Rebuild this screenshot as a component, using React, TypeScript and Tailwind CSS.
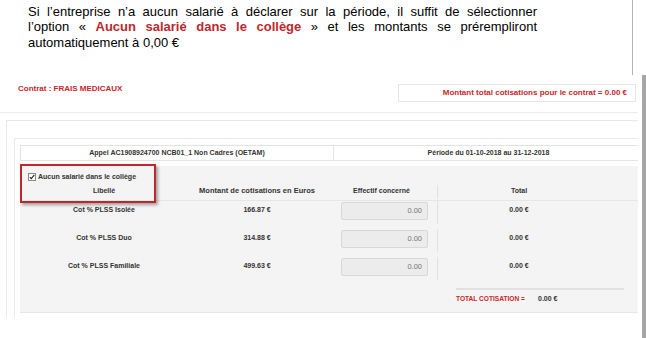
export default function App() {
  const rows = [
    { label: 'Cot % PLSS Isolée', amount: '166.87 €' },
    { label: 'Cot % PLSS Duo', amount: '314.88 €' },
    { label: 'Cot % PLSS Familiale', amount: '499.63 €' },
  ]

  return (
    <div className="w-[646px] h-[338px] bg-white overflow-hidden font-['Liberation_Sans',Arial,sans-serif]">
      {/* Document text */}
      <div className="flex h-[75px]">
        <div className="w-[633px] border-r border-[#b4b4b4] pl-[28px] pt-[4px]">
          <div className="w-[509px] text-[13px] leading-[15.3px] text-black">
            <p className="text-justify [text-align-last:justify]">
              Si l’entreprise n’a aucun salarié à déclarer sur la période, il suffit de sélectionner
            </p>
            <p className="text-justify [text-align-last:justify]">
              l’option « <span className="font-bold text-[#c0272d]">Aucun salarié dans le collège</span> » et les montants se prérempliront
            </p>
            <p>automatiquement à 0,00 €</p>
          </div>
        </div>
      </div>

      {/* Embedded screenshot */}
      <div className="flex h-[263px]">
        <div className="w-[638px] h-[243px] overflow-hidden">
          <div className="flex items-start justify-between pt-[9px]">
            <div className="pl-[18px] text-[8px] leading-[10px] font-bold text-[#c9252c]">Contrat : FRAIS MEDICAUX</div>
            <div className="mr-[2px] w-[238px] h-[18px] border border-[#e6e6e6] flex items-center justify-end pr-[8px] text-[8px] leading-[10px] font-bold text-[#c9252c]">
              Montant total cotisations pour le contrat = 0.00 €
            </div>
          </div>
          <div className="mt-[10px] border-t border-[#ececec]" />

          <div className="mt-[7px] ml-[6px] w-[700px] h-[300px] border-l border-t border-[#e8e8e8] pl-[7px] pt-[17px]">
            <div className="h-[300px] border-l border-t border-[#e8e8e8] pl-[5px] pt-[6px]">
              {/* Header */}
              <div className="flex h-[16px] text-[7px] leading-[8px] font-bold text-[#333]">
                <div className="w-[314px] border border-[#e4e4e4] flex items-center justify-center">
                  Appel AC1908924700 NCB01_1 Non Cadres (OETAM)
                </div>
                <div className="w-[310px] border border-l-0 border-[#e4e4e4] flex items-center justify-center">
                  Période du 01-10-2018 au 31-12-2018
                </div>
              </div>

              {/* Table */}
              <div className="relative mt-[5px] w-[640px] h-[147px] bg-[#f4f4f4] border-b border-[#e6e6e6] text-[7px] leading-[8px] font-bold text-[#333]">
                <div className="flex items-center gap-[2px] pl-[8px] pt-[7px]">
                  <svg width="8" height="8" viewBox="0 0 8 8" className="shrink-0">
                    <rect x="0.5" y="0.5" width="7" height="7" fill="#fff" stroke="#8a8a8a" />
                    <path d="M1.8 4.1 L3.3 5.7 L6.3 1.9" fill="none" stroke="#222" strokeWidth="1.1" />
                  </svg>
                  <span>Aucun salarié dans le collège</span>
                </div>

                <div className="mt-[4px] flex h-[16px] border-b border-[#e6e6e6]">
                  <div className="w-[168px] pt-[2px] text-center">Libellé</div>
                  <div className="w-[138px] pt-[2px] text-center text-[7.5px]">Montant de cotisations en Euros</div>
                  <div className="w-[111px] pt-[2px] text-center">Effectif concerné</div>
                  <div className="w-[163px] h-[14px] pt-[2px] text-center border-l border-[#e2e2e2]">Total</div>
                </div>

                {rows.map((r) => (
                  <div key={r.label} className="flex h-[28px]">
                    <div className="w-[168px] pt-[5px] text-center">{r.label}</div>
                    <div className="w-[138px] pt-[5px] text-center">{r.amount}</div>
                    <div className="w-[111px] flex justify-end pr-[9px] pt-[1px]">
                      <div className="w-[87px] h-[18px] rounded-[2px] bg-[#ececec] border border-[#d8d8d8] flex items-center justify-end pr-[5px] text-[7.5px] font-normal text-[#777]">
                        0.00
                      </div>
                    </div>
                    <div className="w-[163px] h-[23px] pt-[5px] text-center border-l border-[#e2e2e2]">0.00 €</div>
                  </div>
                ))}

                <div className="mt-[3px] ml-[436px] w-[168px] h-[2px] bg-[#e2e2e2]" />
                <div className="mt-[5px] ml-[436px] flex">
                  <span className="w-[82px] text-[6.6px] text-[#c9252c]">TOTAL COTISATION =</span>
                  <span>0.00 €</span>
                </div>

                {/* Highlight annotation */}
                <div className="absolute left-0 top-[-2px] w-[136px] h-[39px] border-[2.5px] border-[#c0272d] shadow-[2px_2px_3px_rgba(0,0,0,0.35)]" />
              </div>
            </div>
          </div>
        </div>
        <div className="ml-[4px] w-[4px] bg-[#a6a6a6]" />
      </div>
    </div>
  )
}
